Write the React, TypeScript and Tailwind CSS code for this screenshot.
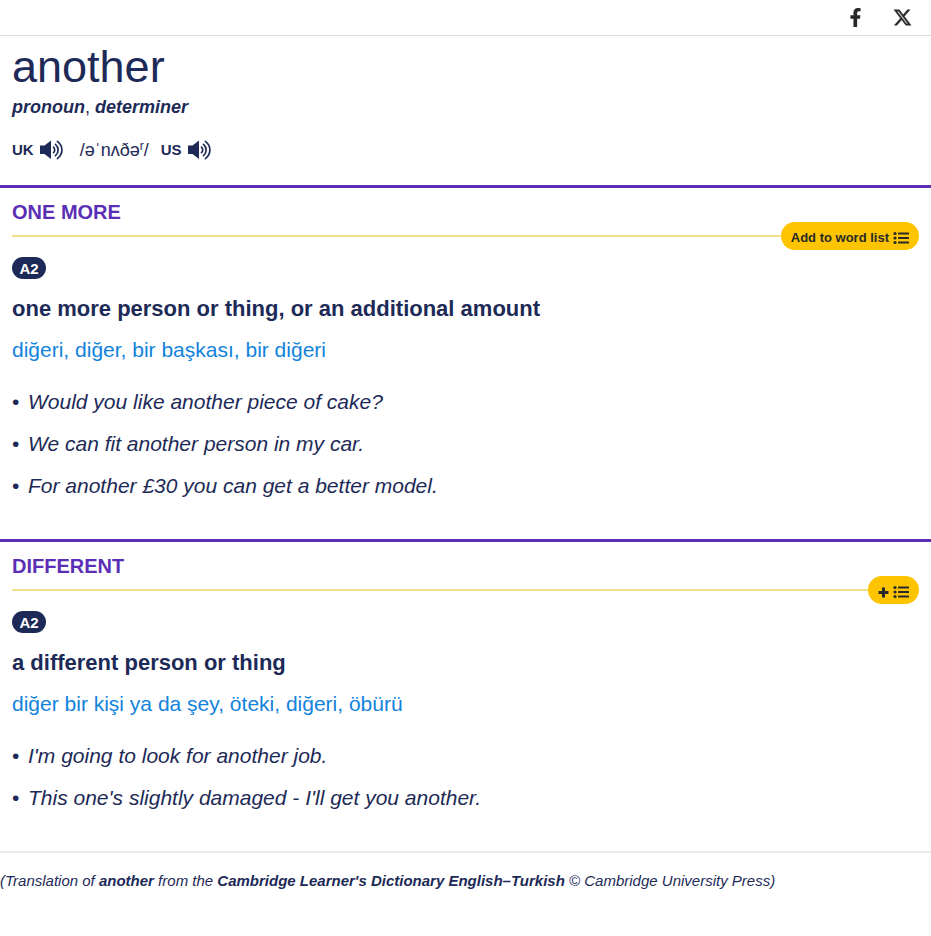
import type { ReactNode } from "react";
import { FaFacebookF } from "react-icons/fa";
import { FaXTwitter } from "react-icons/fa6";

function SpeakerIcon() {
  return (
    <svg viewBox="0 0 24 20" className="h-5 w-6" fill="none" aria-hidden="true">
      <path d="M0 5.500h4.500L11 0.500v18.500L4.500 14H0z" fill="currentColor" />
      <path
        d="M13.500 7.200c1.600 1.500 1.600 4 0 5.500M15.500 4.300c3.500 3 3.500 8.300 0 11.300M17.400 1.400c6 4.500 6 12.700 0 17.200"
        stroke="currentColor"
        strokeWidth="1.700"
        strokeLinecap="round"
      />
    </svg>
  );
}

function PlusIcon() {
  return (
    <svg viewBox="0 0 11 11" className="size-[11px]" fill="currentColor" aria-hidden="true">
      <path d="M4 0.500h3V4h3.500v3H7v3.500H4V7H0.500V4H4z" />
    </svg>
  );
}

function ListIcon() {
  return (
    <svg viewBox="0 0 16 16" className="size-4" fill="currentColor" aria-hidden="true">
      <circle cx="2" cy="3.500" r="1.600" />
      <circle cx="2" cy="8" r="1.600" />
      <circle cx="2" cy="12.500" r="1.600" />
      <rect x="5" y="2.500" width="11" height="2" rx="0.500" />
      <rect x="5" y="7" width="11" height="2" rx="0.500" />
      <rect x="5" y="11.500" width="11" height="2" rx="0.500" />
    </svg>
  );
}

function Pronunciation({ region, ipa }: { region: string; ipa?: ReactNode }) {
  return (
    <div className="flex items-center">
      <span className="text-[15px] font-bold">{region}</span>
      <button type="button" aria-label={`Listen to the ${region} pronunciation`} className="ml-1.5">
        <SpeakerIcon />
      </button>
      {ipa && <span className="ml-4 text-[18px] leading-6">{ipa}</span>}
    </div>
  );
}

type SenseProps = {
  title: string;
  definition: string;
  translation: string;
  examples: string[];
  action: ReactNode;
  actionLabel: string;
};

function Sense({ title, definition, translation, examples, action, actionLabel }: SenseProps) {
  return (
    <section className="border-t-3 border-[#5b2fb5] px-3 pt-3 pb-[39px]">
      <div className="relative border-b-2 border-[#f3e08a] pb-[11px]">
        <h2 className="text-[20px] leading-6 font-bold text-[#5b2fb5]">{title}</h2>
        <button
          type="button"
          aria-label={actionLabel}
          className="absolute right-0 -bottom-[15px] flex h-7 items-center gap-1 rounded-full bg-[#fec400] px-2.5 pt-1 text-[13px] font-bold text-[#292929]"
        >
          {action}
          <ListIcon />
        </button>
      </div>
      <span className="mt-5 block h-[22px] w-[34px] rounded-full bg-[#1d2a57] pt-px text-center text-[15px] leading-[22px] font-bold text-white">
        A2
      </span>
      <p className="mt-4 text-[22px] leading-7 font-bold">{definition}</p>
      <p lang="tr" className="mt-[13px] text-[21px] leading-7 text-[#1183dd]">
        {translation}
      </p>
      <ul className="mt-6 flex flex-col gap-3.5">
        {examples.map((example) => (
          <li key={example} className="flex text-[21px] leading-7">
            <span aria-hidden="true" className="w-4">•</span>
            <span className="italic">{example}</span>
          </li>
        ))}
      </ul>
    </section>
  );
}

export default function App() {
  return (
    <main className="bg-white font-['Liberation_Sans',Arial,sans-serif] text-[#1d2a57]">
      <nav aria-label="Share" className="flex h-9 items-center justify-end gap-7 border-b border-[#dedede] pr-[19px] text-[#292929]">
        <a href="#facebook" aria-label="Facebook">
          <FaFacebookF className="size-[19px]" />
        </a>
        <a href="#x" aria-label="X">
          <FaXTwitter className="size-[19px]" stroke="currentColor" strokeWidth="12" />
        </a>
      </nav>
      <header className="px-3 pt-[7px] pb-[23px]">
        <h1 className="text-[45px] leading-[48px]">another</h1>
        <p className="mt-1 text-[18px] leading-6">
          <b className="italic">pronoun</b>, <b className="italic">determiner</b>
        </p>
        <div className="mt-[19px] flex items-center gap-3">
          <Pronunciation
            region="UK"
            ipa={
              <>
                /əˈnʌðə<sup className="text-[12px]">r</sup>/
              </>
            }
          />
          <Pronunciation region="US" />
        </div>
      </header>
      <Sense
        title="ONE MORE"
        definition="one more person or thing, or an additional amount"
        translation="diğeri, diğer, bir başkası, bir diğeri"
        examples={[
          "Would you like another piece of cake?",
          "We can fit another person in my car.",
          "For another £30 you can get a better model.",
        ]}
        action="Add to word list"
        actionLabel="Add to word list"
      />
      <Sense
        title="DIFFERENT"
        definition="a different person or thing"
        translation="diğer bir kişi ya da şey, öteki, diğeri, öbürü"
        examples={["I'm going to look for another job.", "This one's slightly damaged - I'll get you another."]}
        action={<PlusIcon />}
        actionLabel="Add this meaning to word list"
      />
      <footer className="border-t-2 border-[#ebebeb] pt-4 text-[15px] leading-6 italic">
        (Translation of <b>another</b> from the <b>Cambridge Learner's Dictionary English–Turkish</b> © Cambridge
        University Press)
      </footer>
    </main>
  );
}
